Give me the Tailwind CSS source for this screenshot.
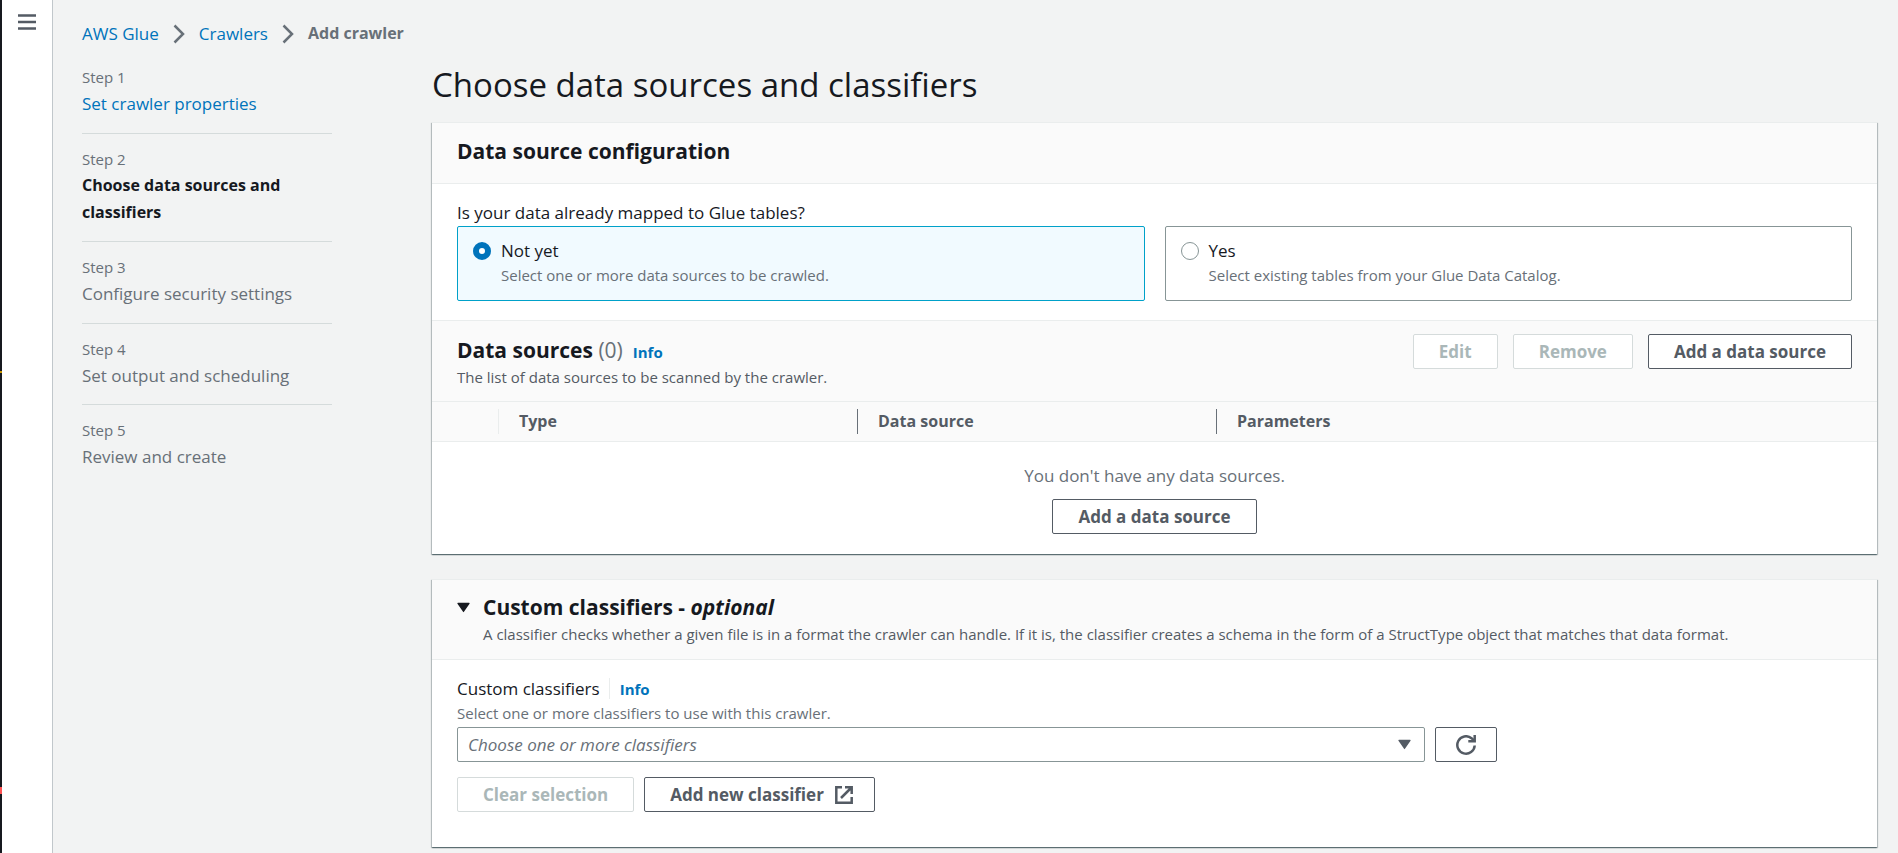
<!DOCTYPE html>
<html lang="en">
<head>
<meta charset="utf-8">
<title>Add crawler - AWS Glue</title>
<script src="https://cdn.jsdelivr.net/npm/@tailwindcss/browser@4"></script>
</head>
<body class="min-h-screen flex bg-[#f2f3f3] text-[#16191f] text-[17px] leading-[27px] font-['Open_Sans','Noto_Sans',sans-serif]">

<!-- Window edge -->
<div class="w-[2px] shrink-0 bg-[#16191f] flex flex-col">
  <div class="h-[371px]"></div>
  <div class="h-[2px] bg-[#c99700]"></div>
  <div class="h-[414px]"></div>
  <div class="h-[7px] bg-[#ff5252]"></div>
</div>

<!-- Collapsed navigation -->
<nav aria-label="Service navigation" class="w-[51px] shrink-0 bg-white border-r border-[#c1c7cb] flex justify-center items-start pt-[12px]">
  <button type="button" aria-label="Open navigation" class="text-[#545b64]">
    <svg class="block w-5 h-5" viewBox="0 0 20 20" fill="none" stroke="currentColor" stroke-width="2.500"><path d="M1 3.500h18M1 10h18M1 16.500h18"/></svg>
  </button>
</nav>

<div class="flex-1 min-w-0 pl-[29px] pr-[21px] pt-[20px]">
  <nav aria-label="Breadcrumbs">
    <ol class="flex items-center gap-[14px]">
      <li><a href="#" class="text-[#0073bb]">AWS Glue</a></li>
      <li aria-hidden="true"><svg class="block w-3 h-5 text-[#687078]" viewBox="0 0 12 20" fill="none" stroke="currentColor" stroke-width="2.500"><path d="M1.500 1.500 10 10l-8.500 8.500"/></svg></li>
      <li><a href="#" class="text-[#0073bb]">Crawlers</a></li>
      <li aria-hidden="true"><svg class="block w-3 h-5 text-[#687078]" viewBox="0 0 12 20" fill="none" stroke="currentColor" stroke-width="2.500"><path d="M1.500 1.500 10 10l-8.500 8.500"/></svg></li>
      <li class="font-bold text-[16px] leading-[27px] text-[#687078]">Add crawler</li>
    </ol>
  </nav>

  <div class="flex gap-[100px]">
    <!-- Wizard steps -->
    <nav aria-label="Steps" class="w-[250px] shrink-0 pt-[5px]">
      <ol class="divide-y divide-[#d5dbdb] text-[#687078]">
        <li class="pt-[13px] pb-[16px]"><p class="text-[15px] leading-[25px]">Step 1</p><a href="#" class="block text-[#0073bb]">Set crawler properties</a></li>
        <li class="pt-[13px] pb-[15px]"><p class="text-[15px] leading-[25px]">Step 2</p><p class="font-bold text-[16px] leading-[27px] text-[#16191f]">Choose data sources and classifiers</p></li>
        <li class="pt-[13px] pb-[16px]"><p class="text-[15px] leading-[25px]">Step 3</p><p>Configure security settings</p></li>
        <li class="pt-[13px] pb-[15px]"><p class="text-[15px] leading-[25px]">Step 4</p><p>Set output and scheduling</p></li>
        <li class="pt-[13px] pb-[15px]"><p class="text-[15px] leading-[25px]">Step 5</p><p>Review and create</p></li>
      </ol>
    </nav>

    <main class="flex-1 min-w-0 pt-[16px]">
      <h1 class="text-[33px] leading-[44px] mb-[15px]">Choose data sources and classifiers</h1>

      <!-- Data source configuration -->
      <section class="bg-white border-t border-[#eaeded] shadow-[0_1px_1px_rgba(0,28,36,0.4),1px_1px_1px_rgba(0,28,36,0.2),-1px_1px_1px_rgba(0,28,36,0.2)] mb-[25px]">
        <header class="bg-[#fafafa] border-b border-[#eaeded] px-[25px] pt-[13px] pb-[17px]">
          <h2 class="text-[21px] leading-[30px] font-bold">Data source configuration</h2>
        </header>
        <fieldset class="px-[25px] pt-[15px] pb-[19px]">
          <legend class="contents"><span class="block">Is your data already mapped to Glue tables?</span></legend>
          <div class="grid grid-cols-2 gap-[20px]">
            <label class="flex gap-[10px] border border-[#00a1c9] bg-[#f1faff] rounded-[2px] px-[15px] pt-[10px] pb-[14px]">
              <input type="radio" name="mapped" checked class="appearance-none shrink-0 mt-[5px] w-[18px] h-[18px] rounded-full border border-[#879596] bg-white checked:border-[6px] checked:border-[#0073bb]">
              <span><span class="block">Not yet</span><span class="block text-[15px] leading-[22px] text-[#687078]">Select one or more data sources to be crawled.</span></span>
            </label>
            <label class="flex gap-[10px] border border-[#879596] bg-white rounded-[2px] px-[15px] pt-[10px] pb-[14px]">
              <input type="radio" name="mapped" class="appearance-none shrink-0 mt-[5px] w-[18px] h-[18px] rounded-full border border-[#879596] bg-white checked:border-[6px] checked:border-[#0073bb]">
              <span><span class="block">Yes</span><span class="block text-[15px] leading-[22px] text-[#687078]">Select existing tables from your Glue Data Catalog.</span></span>
            </label>
          </div>
        </fieldset>

        <header class="bg-[#fafafa] border-t border-[#eaeded] px-[25px] pt-[13px] pb-[13px] flex items-start justify-between">
          <div class="pt-[1px]">
            <div class="flex items-baseline gap-[10px]">
              <h2 class="text-[21px] leading-[31px] font-bold">Data sources <span class="font-normal text-[#687078]">(0)</span></h2>
              <a href="#" class="text-[15px] leading-[22px] font-bold text-[#0073bb]">Info</a>
            </div>
            <p class="text-[15px] leading-[22px] text-[#545b64]">The list of data sources to be scanned by the crawler.</p>
          </div>
          <div class="flex gap-[15px]">
            <button type="button" disabled class="h-[35px] px-[25px] rounded-[2px] border border-[#d5dbdb] bg-white font-bold text-[#aab7b8]">Edit</button>
            <button type="button" disabled class="h-[35px] px-[25px] rounded-[2px] border border-[#d5dbdb] bg-white font-bold text-[#aab7b8]">Remove</button>
            <button type="button" class="h-[35px] px-[25px] rounded-[2px] border border-[#545b64] bg-white font-bold text-[#545b64]">Add a data source</button>
          </div>
        </header>
        <table class="w-full table-fixed border-collapse">
          <colgroup><col class="w-[67px]"><col class="w-[359px]"><col class="w-[359px]"><col></colgroup>
          <thead class="bg-[#fafafa] border-y border-[#eaeded] text-left text-[#545b64]">
            <tr>
              <td class="p-0"><div class="h-[25px] border-r border-[#eaeded]"></div></td>
              <th scope="col" class="p-0 py-[7px]"><div class="h-[25px] pl-[20px] border-r border-[#687078] font-bold text-[16px] leading-[25px]">Type</div></th>
              <th scope="col" class="p-0"><div class="h-[25px] pl-[20px] border-r border-[#687078] font-bold text-[16px] leading-[25px]">Data source</div></th>
              <th scope="col" class="p-0"><div class="h-[25px] pl-[20px] font-bold text-[16px] leading-[25px]">Parameters</div></th>
            </tr>
          </thead>
          <tbody>
            <tr>
              <td colspan="4" class="pt-[20px] pb-[20px] text-center">
                <p class="text-[#687078] mb-[10px]">You don't have any data sources.</p>
                <button type="button" class="h-[35px] px-[25px] rounded-[2px] border border-[#545b64] bg-white font-bold text-[#545b64]">Add a data source</button>
              </td>
            </tr>
          </tbody>
        </table>
      </section>

      <!-- Custom classifiers -->
      <section class="bg-white border-t border-[#eaeded] shadow-[0_1px_1px_rgba(0,28,36,0.4),1px_1px_1px_rgba(0,28,36,0.2),-1px_1px_1px_rgba(0,28,36,0.2)]">
        <header class="bg-[#fafafa] border-b border-[#eaeded] px-[25px] pt-[12px] pb-[13px] flex gap-[13px]">
          <button type="button" aria-label="Collapse custom classifiers" class="self-start pt-[10px]">
            <svg class="block w-[13px] h-[11px]" viewBox="0 0 14 11" fill="currentColor"><path d="M1 .5h12a.6.6 0 0 1 .5 1L7.500 10.200a.6.6 0 0 1-1 0L.5 1.500A.6.6 0 0 1 1 .5Z"/></svg>
          </button>
          <div>
            <h2 class="text-[21px] leading-[30px] font-bold">Custom classifiers - <em>optional</em></h2>
            <p class="text-[15px] leading-[24px] text-[#545b64]">A classifier checks whether a given file is in a format the crawler can handle. If it is, the classifier creates a schema in the form of a StructType object that matches that data format.</p>
          </div>
        </header>
        <div class="px-[25px] pt-[15px] pb-[35px]">
          <div class="flex items-center">
            <label for="classifiers">Custom classifiers</label>
            <a href="#" class="ml-[9px] pl-[10px] h-[21px] border-l border-[#eaeded] text-[15px] leading-[22px] font-bold text-[#0073bb]">Info</a>
          </div>
          <p class="text-[15px] leading-[22px] mb-[3px] text-[#687078]">Select one or more classifiers to use with this crawler.</p>
          <div class="grid grid-cols-12 gap-[25px]">
            <div class="col-span-9 flex gap-[10px]">
              <div class="grid flex-1">
                <select id="classifiers" class="col-start-1 row-start-1 appearance-none w-full h-[35px] px-[10px] rounded-[2px] border border-[#879596] bg-white italic text-[#687078]"><option>Choose one or more classifiers</option></select>
                <svg class="col-start-1 row-start-1 self-center justify-self-end mr-[14px] w-[13px] h-[11px] text-[#545b64] pointer-events-none" viewBox="0 0 14 11" fill="currentColor"><path d="M1 .5h12a.6.6 0 0 1 .5 1L7.500 10.200a.6.6 0 0 1-1 0L.5 1.500A.6.6 0 0 1 1 .5Z"/></svg>
              </div>
              <button type="button" aria-label="Refresh classifiers" class="w-[62px] h-[35px] rounded-[2px] border border-[#545b64] bg-white text-[#545b64] flex items-center justify-center">
                <svg class="w-[20px] h-[20px]" viewBox="0 0 20 20" fill="none" stroke="currentColor" stroke-width="2.500"><path d="M18.700 10.500A8.700 8.700 0 1 1 15.500 3.200L18 5.500"/><path d="M18.700 0v6.300h-6.400"/></svg>
              </button>
            </div>
          </div>
          <div class="flex gap-[10px] mt-[15px]">
            <button type="button" disabled class="h-[35px] px-[25px] rounded-[2px] border border-[#d5dbdb] bg-white font-bold text-[#aab7b8]">Clear selection</button>
            <button type="button" class="h-[35px] pl-[25px] pr-[21px] rounded-[2px] border border-[#545b64] bg-white font-bold text-[#545b64] flex items-center gap-[11px]">Add new classifier
              <svg class="w-[18px] h-[18px]" viewBox="0 0 18 18" fill="none" stroke="currentColor" stroke-width="2.500"><path d="M7 1.300H1.300v15.400h15.400V11"/><path d="M10 1.300h6.700v6.700M6 12 16.500 1.500"/></svg>
            </button>
          </div>
        </div>
      </section>
    </main>
  </div>
</div>
</body>
</html>
